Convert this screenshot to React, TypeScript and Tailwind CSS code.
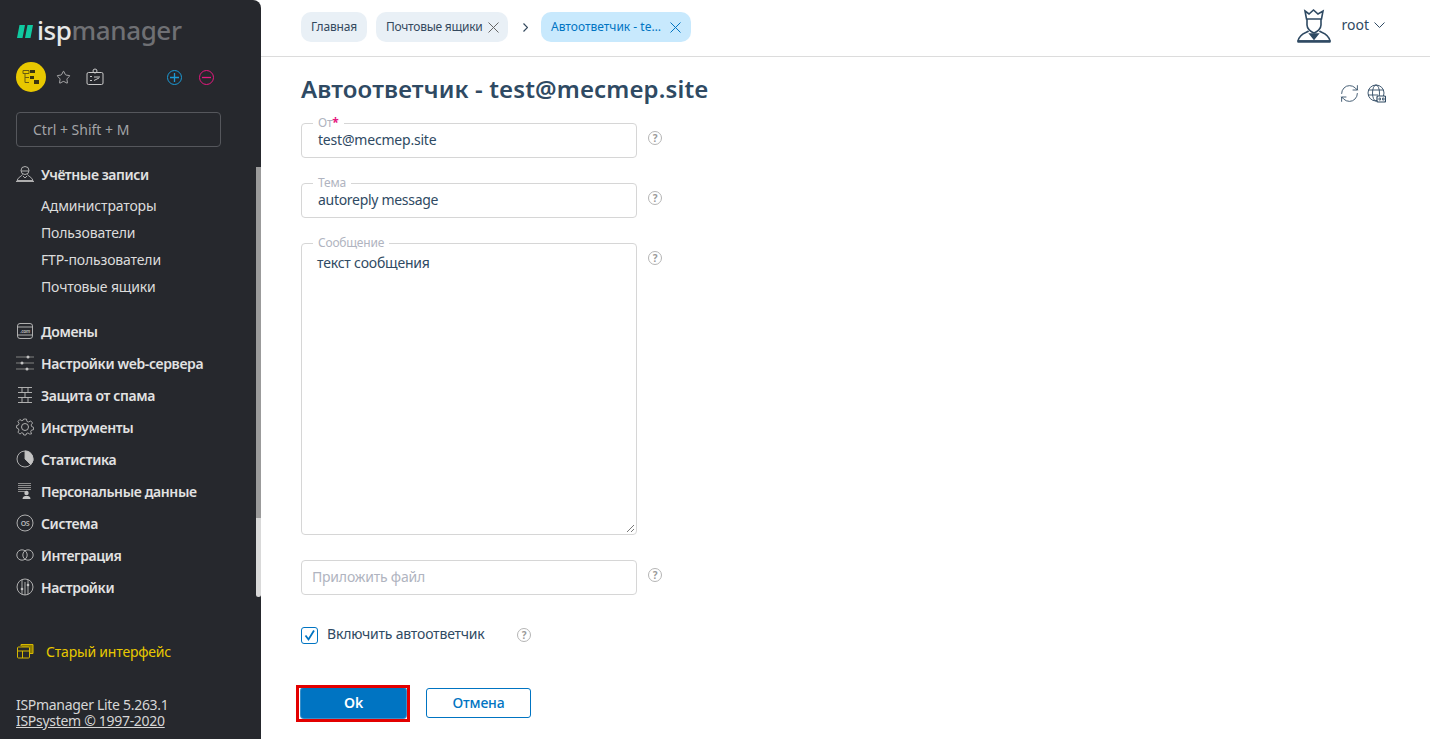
import React from "react";
import { Star, RefreshCw } from "lucide-react";

const font = { fontFamily: '"Noto Sans", "Open Sans", sans-serif' };

const I = ({ children }: { children: React.ReactNode }) => (
  <svg width="18" height="18" viewBox="0 0 18 18" fill="none" stroke="#bdbdbd" strokeWidth="0.9" className="shrink-0">
    {children}
  </svg>
);

const Cross = ({ color }: { color: string }) => (
  <svg width="11" height="11" viewBox="0 0 11 11" fill="none" stroke={color} strokeWidth="1" className="shrink-0">
    <path d="M.5.500l10 10M10.500.500l-10 10" />
  </svg>
);

const icons: Record<string, React.ReactNode> = {
  user: (
    <I>
      <circle cx="9" cy="5.500" r="4" />
      <path d="M5 6h8M6.500 9.500c-.2 1.500-4.500 2.500-5.500 6h16c-1-3.500-5.300-4.500-5.500-6" />
      <path d="M7 11l2 2 2-2M0 16.500h18" />
    </I>
  ),
  com: (
    <I>
      <rect x="1.500" y="1.500" width="15" height="15" rx="2.500" />
      <path d="M1.500 5h15M1.500 13h15" />
      <text x="9" y="10.500" textAnchor="middle" fontSize="5" fill="#bdbdbd" stroke="none" fontStyle="italic">.com</text>
    </I>
  ),
  web: (
    <I>
      <path d="M0 3h18M0 9h18M0 15h18" stroke="#8d8d8d" />
      <circle cx="12" cy="3" r="1.500" fill="#c4c4c4" stroke="none" />
      <circle cx="6" cy="9" r="1.500" fill="#c4c4c4" stroke="none" />
      <circle cx="11" cy="15" r="1.500" fill="#c4c4c4" stroke="none" />
    </I>
  ),
  wall: (
    <I>
      <path d="M2 1.500h14M2 6.500h14M2 11.500h14M2 16.500h14M6 1.500v5M12 1.500v5M9 6.500v5M6 11.500v5M12 11.500v5" />
    </I>
  ),
  gear: (
    <I>
      <circle cx="9" cy="9" r="3.500" />
      <path d="M7.500 1h3l.5 2.500 1.500.7L15 3l2 2.200-1.500 2 .5 1.800 2 .8v2.500l-2.300.6-.7 1.600 1 2.200L14 17l-2-1.200-1.500.6L10 18H7.600l-.6-1.800-1.600-.6L3.500 17 1.500 15l1-2.200-.7-1.600L0 10.500V8l2-.7.600-1.600L1.500 3.500 3.500 1.500l2 1.300 1.500-.6z" transform="translate(.6 .1) scale(.94)" />
    </I>
  ),
  pie: (
    <I>
      <circle cx="9" cy="9" r="8" />
      <path d="M9 1v8l5.700 5.700A8 8 0 0 0 9 1z" fill="#c4c4c4" />
    </I>
  ),
  pers: (
    <I>
      <path d="M2 1.500h13M2 3.500h13M2 5.500h13M2 7.500h13M2 9.500h7" stroke="#8d8d8d" strokeWidth="1.100" />
      <circle cx="10.500" cy="11" r="2.200" fill="#c4c4c4" stroke="none" />
      <path d="M6.500 17c0-2.500 2-3 4-3s4 .5 4 3z" fill="#c4c4c4" stroke="none" />
    </I>
  ),
  os: (
    <I>
      <circle cx="9" cy="9" r="8" />
      <text x="9" y="11.500" textAnchor="middle" fontSize="7" fill="#bdbdbd" stroke="none">OS</text>
    </I>
  ),
  integ: (
    <I>
      <circle cx="6" cy="9" r="5.200" />
      <circle cx="12" cy="9" r="5.200" />
    </I>
  ),
  conf: (
    <I>
      <circle cx="9" cy="9" r="8" />
      <path d="M6 1.800v14.400M9 4v13M12 1.800v14.400" />
      <circle cx="6" cy="11" r="1.300" fill="#c4c4c4" stroke="none" />
      <circle cx="12" cy="7" r="1.300" fill="#c4c4c4" stroke="none" />
    </I>
  ),
};

const menu: [string, string][] = [
  ["com", "Домены"],
  ["web", "Настройки web-сервера"],
  ["wall", "Защита от спама"],
  ["gear", "Инструменты"],
  ["pie", "Статистика"],
  ["pers", "Персональные данные"],
  ["os", "Система"],
  ["integ", "Интеграция"],
  ["conf", "Настройки"],
];

const Help = ({ className = "" }: { className?: string }) => (
  <span className={`flex h-[14px] w-[14px] shrink-0 items-center justify-center rounded-full border border-[#b5b5b5] text-[10px] font-bold leading-none text-[#9a9a9a] ${className}`}>
    ?
  </span>
);

const Legend = ({ children }: { children: React.ReactNode }) => (
  <span className="absolute left-[11px] top-[-8px] bg-white px-[5px] text-[12px] leading-[14px] tracking-[-0.2px] text-[#b0b4c0]">{children}</span>
);

const Sidebar = () => (
  <aside className="relative flex h-[739px] w-[261px] shrink-0 flex-col rounded-tr-[8px] bg-[#26282d] pl-[16px] text-[#d9d9d9]">
    <div className="absolute right-0 top-[167px] flex h-[430px] w-[5px] flex-col">
      <div className="h-[351px] bg-[#9b9b9b]" />
      <div className="flex-1 rounded-b-sm bg-[#d9d9d9]" />
    </div>

    <div className="flex h-[62px] items-center gap-[4px] pb-[2px] pl-[1px]">
      <svg width="16" height="13" viewBox="0 0 16 13" className="mt-[2px] shrink-0">
        <path d="M2.500 0H8L5.500 13H0zM10.500 0H16l-2.500 13H8z" fill="#10c9a0" />
      </svg>
      <span className="text-[26px] font-medium leading-none tracking-[-0.4px]">
        <span className="text-[#e8e8e8]">isp</span>
        <span className="text-[#6f7074]">manager</span>
      </span>
    </div>

    <div className="flex h-[30px] items-center">
      <span className="flex h-[30px] w-[30px] items-center justify-center rounded-full bg-[#e8c800]">
        <svg width="18" height="18" viewBox="0 0 18 18" fill="none" stroke="#6b5d10">
          <path d="M1 2.500h6v3H1zM3 5.500v9h4M3 9.500h4" />
          <rect x="8" y="2" width="5" height="3" fill="#3a3510" stroke="none" />
          <rect x="8" y="8" width="4" height="3" fill="#3a3510" stroke="none" />
          <rect x="12" y="12" width="5" height="4" fill="#3a3510" stroke="none" />
        </svg>
      </span>
      <Star size={15} strokeWidth={1.200} className="ml-[10px] text-[#d0d0d0]" />
      <svg width="18" height="18" viewBox="0 0 18 18" fill="none" stroke="#c9c9c9" className="ml-[15px]">
        <rect x="1" y="4.500" width="16" height="12" rx="1.500" />
        <circle cx="9" cy="3" r="2" />
        <path d="M4 8.500h2M4 12.500h2M8 9h6M8 12.500l5-2.500" />
      </svg>
      <span className="ml-[63px] flex h-[15px] w-[15px] items-center justify-center rounded-full border-[1.500px] border-[#1b9ad6]">
        <svg width="9" height="9" viewBox="0 0 9 9" stroke="#1b9ad6" strokeWidth="1.300"><path d="M4.500 0v9M0 4.500h9" /></svg>
      </span>
      <span className="ml-[17px] flex h-[15px] w-[15px] items-center justify-center rounded-full border-[1.500px] border-[#e6187f]">
        <svg width="9" height="9" viewBox="0 0 9 9" stroke="#e6187f" strokeWidth="1.300"><path d="M0 4.500h9" /></svg>
      </span>
    </div>

    <div className="mt-[20px] flex h-[35px] w-[205px] items-center rounded-[4px] border border-[#55575c] pl-[16px] text-[14px] text-[#a3a4a7]">
      Ctrl + Shift + M
    </div>

    <div className="mt-[17px] flex h-[20px] items-center gap-[7px] text-[14px] font-semibold tracking-[-0.42px] text-[#e2e2e2]">
      {icons.user}
      <span>Учётные записи</span>
    </div>
    <div className="mt-[8px] flex flex-col pl-[25px] text-[14px] tracking-[-0.15px] text-[#dcdcdc]">
      {["Администраторы", "Пользователи", "FTP-пользователи", "Почтовые ящики"].map((t) => (
        <div key={t} className="flex h-[27px] items-center">{t}</div>
      ))}
    </div>

    <div className="mt-[15px] flex flex-col text-[14px] font-semibold tracking-[-0.38px] text-[#e2e2e2]">
      {menu.map(([ic, t]) => (
        <div key={t} className="flex h-[32px] items-center gap-[7px]">
          {icons[ic]}
          <span>{t}</span>
        </div>
      ))}
    </div>

    <div className="mt-[38px] flex h-[20px] items-center gap-[12px] text-[14px] tracking-[-0.2px] text-[#e8c800]">
      <svg width="18" height="18" viewBox="0 0 18 18" fill="none" stroke="#d6b800" className="shrink-0">
        <path d="M5 4V2.500h12v9h-3" fill="#8f7c00" />
        <rect x="1.500" y="5" width="12" height="11" rx="1" fill="#26282d" />
        <path d="M1.500 9h12M6.500 9v7" />
      </svg>
      <span>Старый интерфейс</span>
    </div>

    <div className="mt-[36px] text-[14px] leading-[16px] tracking-[-0.3px] text-[#d6d6d6]">
      <div>ISPmanager Lite 5.263.1</div>
      <div className="underline">ISPsystem © 1997-2020</div>
    </div>
  </aside>
);

const Header = () => (
  <header className="flex h-[57px] items-start border-b border-[#dcdcdc] pl-[40px] pr-[45px] pt-[12px]">
    <div className="flex h-[30px] w-[66px] items-center justify-center rounded-[10px] bg-[#e9f0f6] text-[12px] tracking-[-0.15px] text-[#34495e]">Главная</div>
    <div className="ml-[9px] flex h-[30px] w-[132px] items-center justify-between rounded-[10px] bg-[#e9f0f6] pl-[10px] pr-[9px] text-[12px] tracking-[-0.25px] text-[#34495e]">
      Почтовые ящики
      <Cross color="#666" />
    </div>
    <svg width="5" height="9" viewBox="0 0 5 9" fill="none" stroke="#34495e" strokeWidth="1.200" className="ml-[15px] mt-[11px]">
      <path d="M.5.500l4 4-4 4" />
    </svg>
    <div className="ml-[13px] flex h-[30px] w-[150px] items-center justify-between rounded-[10px] bg-[#c8e9fd] pl-[10px] pr-[10px] text-[12px] text-[#0074c2]">
      Автоответчик - te…
      <Cross color="#0074c2" />
    </div>
    <div className="ml-auto mt-[-5px] flex items-center text-[#2f4a63]">
      <svg width="36" height="36" viewBox="0 0 36 36" fill="none" stroke="#2f4a63" strokeWidth="1.600">
        <path d="M9 4l4 3 4.500-4 4.500 4 5-3-1.500 8H10.500z" />
        <path d="M11 12v6c0 4 4 7 7 8 3-1 7-4 7-8v-6" />
        <path d="M12.500 24c-1 1.500-9 2-10.500 10h32c-1.500-8-9.500-8.500-10.500-10" />
        <path d="M14 27l4 5 4-5z" fill="#2f4a63" />
        <path d="M1.500 34.500h33" strokeWidth="2.500" />
      </svg>
      <span className="ml-[10px] pb-[1px] text-[14px]">root</span>
      <svg width="11" height="6" viewBox="0 0 11 6" fill="none" stroke="#2f4a63" strokeWidth="1" className="ml-[5px]">
        <path d="M.5.500l5 5 5-5" />
      </svg>
    </div>
  </header>
);

const Form = () => (
  <div className="flex flex-col pl-[40px] text-[14px] tracking-[-0.2px] text-[#2f4a63]">
    <div className="flex h-[66px] items-start pr-[44px] pt-[15px]">
      <h1 className="text-[24px] font-semibold leading-[34px] tracking-[0.13px] text-[#2f4a63]">Автоответчик - test@mecmep.site</h1>
      <div className="ml-auto mt-[11px] flex items-center gap-[7px]">
        <RefreshCw size={21} strokeWidth={1} />
        <svg width="19" height="19" viewBox="0 0 19 19" fill="none" stroke="#2f4a63" strokeWidth="0.9">
          <circle cx="9" cy="9" r="8" />
          <ellipse cx="9" cy="9" rx="3.500" ry="8" />
          <path d="M1.500 6h15M1 11h10" />
          <rect x="10" y="12" width="8.500" height="6" rx="1" fill="white" strokeWidth="1.200" />
          <path d="M12 14h1.500v2H12zM15.500 14H17v2h-1.500z" strokeWidth="0.8" />
        </svg>
      </div>
    </div>

    <div className="flex items-start gap-[11px]">
      <div className="relative flex h-[35px] w-[336px] items-center rounded-[4px] border border-[#d6d6d6] pb-[2px] pl-[16px]">
        <Legend>От<span className="font-bold text-[#e6187f]">*</span></Legend>
        test@mecmep.site
      </div>
      <Help className="mt-[8px]" />
    </div>

    <div className="mt-[25px] flex items-start gap-[11px]">
      <div className="relative flex h-[35px] w-[336px] items-center rounded-[4px] border border-[#d6d6d6] pb-[2px] pl-[16px] tracking-[-0.3px]">
        <Legend>Тема</Legend>
        autoreply message
      </div>
      <Help className="mt-[8px]" />
    </div>

    <div className="mt-[25px] flex items-start gap-[11px]">
      <div className="relative h-[292px] w-[336px] rounded-[4px] border border-[#d6d6d6] pl-[15px] pt-[8px]">
        <Legend>Сообщение</Legend>
        текст сообщения
        <svg width="9" height="9" viewBox="0 0 9 9" stroke="#555" strokeWidth="0.8" className="absolute bottom-[1px] right-[1px]">
          <path d="M1 8l7-7M5 8l3-3" />
        </svg>
      </div>
      <Help className="mt-[8px]" />
    </div>

    <div className="mt-[25px] flex items-start gap-[11px]">
      <div className="flex h-[35px] w-[336px] items-center rounded-[4px] border border-[#d6d6d6] pb-[3px] pl-[10px] text-[#b0b4c0]">
        Приложить файл
      </div>
      <Help className="mt-[8px]" />
    </div>

    <div className="mt-[31px] flex h-[18px] items-center">
      <span className="flex h-[17px] w-[17px] items-center justify-center rounded-[3px] border border-[#0074c2]">
        <svg width="13" height="13" viewBox="0 0 13 13" fill="none" stroke="#0074c2" strokeWidth="1.800"><path d="M2.500 6.500l3 4 5.500-9" /></svg>
      </span>
      <span className="ml-[9px] w-[190px] pb-[4px]">Включить автоответчик</span>
      <Help />
    </div>

    <div className="mt-[44px] flex items-center">
      <div className="relative">
        <button className="flex h-[30px] w-[105px] items-center justify-center rounded-[3px] bg-[#0074c2] pb-[1px] font-semibold text-white ring-1 ring-[#3a8fc9]">
          Ok
        </button>
        <span className="absolute bottom-[-4px] left-[-5px] right-[-4px] top-[-3px] border-[3px] border-[#e30000]" />
      </div>
      <button className="ml-[20px] flex h-[30px] w-[105px] items-center justify-center rounded-[3px] border border-[#0074c2] pb-[1px] font-medium text-[#0074c2]">
        Отмена
      </button>
    </div>
  </div>
);

export default function App() {
  return (
    <div className="flex h-[739px] w-[1430px] overflow-hidden bg-white" style={font}>
      <Sidebar />
      <main className="flex min-w-0 flex-1 flex-col">
        <Header />
        <Form />
      </main>
    </div>
  );
}
